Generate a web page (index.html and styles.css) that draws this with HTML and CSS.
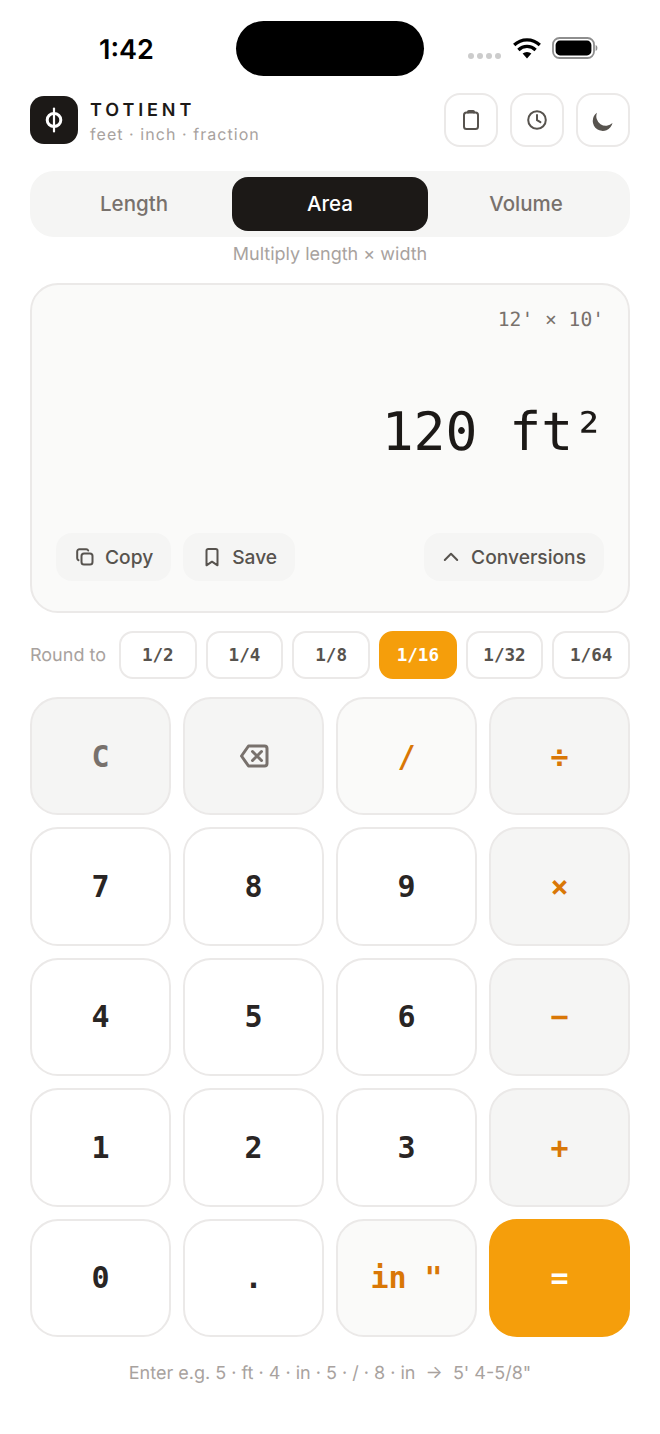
FILE: index.html
```html
<!DOCTYPE html>
<html lang="en">
<head>
<meta charset="utf-8">
<title>Totient</title>
<link rel="stylesheet" href="styles.css">
</head>
<body>
<div class="app">
  <div class="status">
    <div class="time">1:42</div>
    <div class="island"></div>
    <div class="sys">
      <div class="dots"><i></i><i></i><i></i><i></i></div>
      <svg class="wifi" width="30" height="22" viewBox="0 0 30 22"><path d="M15 21.500 10.600 16.600a6.600 6.600 0 0 1 8.800 0Z" fill="#000"/><path d="M6.400 13a12.200 12.200 0 0 1 17.200 0" fill="none" stroke="#000" stroke-width="3.200"/><path d="M2.200 8a18.300 18.300 0 0 1 25.600 0" fill="none" stroke="#000" stroke-width="3.200"/></svg>
      <svg class="battery" width="46" height="22" viewBox="0 0 46 22"><rect x="1" y="1" width="41" height="20" rx="6.500" fill="none" stroke="#8e8e8e" stroke-width="1.800"/><rect x="3.600" y="3.600" width="35.800" height="14.800" rx="4.400" fill="#000"/><path d="M43.600 8v6c1.200-.3 1.800-1.500 1.800-3s-.6-2.700-1.800-3Z" fill="#8e8e8e"/></svg>
    </div>
  </div>

  <header class="top">
    <div class="logo"><svg width="24" height="28" viewBox="0 0 24 28"><ellipse cx="12" cy="14" rx="6.800" ry="6.500" fill="none" stroke="#fff" stroke-width="3"/><path d="M12 2.500v23" stroke="#fff" stroke-width="2.200" stroke-linecap="round"/></svg></div>
    <div class="brand">
      <div class="name">TOTIENT</div>
      <div class="tag">feet · inch · fraction</div>
    </div>
    <div class="tools">
      <button class="tool"><svg width="24" height="24" viewBox="0 0 24 24" class="ico"><rect x="5" y="4.500" width="14" height="16.500" rx="2.500"/><path d="M9 4.500V3.800c0-.5.300-.8.800-.8h4.400c.5 0 .8.300.8.800v.7"/></svg></button>
      <button class="tool"><svg width="24" height="24" viewBox="0 0 24 24" class="ico"><circle cx="12" cy="12" r="8.800"/><path d="M12 7v5.200l3.400 2"/></svg></button>
      <button class="tool"><svg width="24" height="24" viewBox="0 0 24 24"><path d="M6 4.700A10 10 0 1 0 21.500 15 9.500 9.500 0 0 1 6 4.700Z" fill="#57534e"/></svg></button>
    </div>
  </header>

  <nav class="tabs">
    <button class="tab">Length</button>
    <button class="tab on">Area</button>
    <button class="tab">Volume</button>
  </nav>
  <p class="hint">Multiply length × width</p>

  <section class="display">
    <div class="expr">12' × 10'</div>
    <div class="result">120 ft²</div>
    <div class="actions">
      <button class="act"><svg width="20" height="20" viewBox="0 0 20 20" class="ico2"><rect x="6.500" y="6.500" width="11" height="11" rx="2.500"/><path d="M3.500 13.200c-.8-.3-1.300-1-1.300-1.900V4.500c0-1.300 1-2.300 2.300-2.300h6.800c.9 0 1.600.5 1.900 1.300"/></svg>Copy</button>
      <button class="act"><svg width="20" height="20" viewBox="0 0 20 20" class="ico2"><path d="M15.500 18.300l-5.500-3.600-5.500 3.600V3.700c0-1 .7-1.700 1.700-1.700h7.600c1 0 1.700.7 1.700 1.700Z"/></svg>Save</button>
      <button class="act conv"><svg width="20" height="20" viewBox="0 0 20 20" class="ico2"><path d="M3.800 13 10 6.800l6.200 6.200"/></svg>Conversions</button>
    </div>
  </section>

  <div class="round">
    <span class="round-label">Round to</span>
    <button class="chip">1/2</button>
    <button class="chip">1/4</button>
    <button class="chip">1/8</button>
    <button class="chip on">1/16</button>
    <button class="chip">1/32</button>
    <button class="chip">1/64</button>
  </div>

  <div class="keys">
    <button class="key fn">C</button>
    <button class="key fn"><svg width="30" height="24" viewBox="0 0 30 24" class="del"><path d="M9.500 2H25.500c1.400 0 2.500 1.100 2.500 2.500v15c0 1.400-1.100 2.500-2.500 2.500H9.500L2.500 12Z"/><path d="m13.500 7.500 9 9m0-9-9 9"/></svg></button>
    <button class="key op">/</button>
    <button class="key op shade">÷</button>
    <button class="key">7</button>
    <button class="key">8</button>
    <button class="key">9</button>
    <button class="key op shade">×</button>
    <button class="key">4</button>
    <button class="key">5</button>
    <button class="key">6</button>
    <button class="key op shade">−</button>
    <button class="key">1</button>
    <button class="key">2</button>
    <button class="key">3</button>
    <button class="key op shade">+</button>
    <button class="key">0</button>
    <button class="key">.</button>
    <button class="key op">in "</button>
    <button class="key eq">=</button>
  </div>

  <p class="foot">Enter e.g. 5 · ft · 4 · in · 5 · / · 8 · in &nbsp;→&nbsp; 5' 4-5/8"</p>
</div>
</body>
</html>
```
FILE: styles.css
```css
* { box-sizing: border-box; }
html, body { margin: 0; background: #fff; }
body { font-family: Inter, "Liberation Sans", sans-serif; color: #1c1917; text-rendering: geometricPrecision; }
button { font: inherit; cursor: pointer; padding: 0; }
.app { width: 660px; height: 1434px; padding: 21px 30px 0; display: flex; flex-direction: column; }

.status { height: 55px; display: flex; align-items: center; }
.time { width: 206px; padding-left: 69px; padding-top: 2px; font-size: 27px; font-weight: 600; color: #000; line-height: 55px; }
.island { width: 188px; height: 55px; border-radius: 28px; background: #000; }
.sys { display: flex; align-items: center; padding-left: 44px; }
.dots { display: flex; gap: 3px; margin-top: 14px; }
.dots i { width: 6px; height: 6px; border-radius: 50%; background: #ccc; }
.wifi { margin-top: -1px; margin-left: 11px; }
.battery { margin-left: 10px; margin-top: -1px; }

.top { display: flex; align-items: center; margin-top: 17px; height: 54px; }
.logo { width: 48px; height: 48px; border-radius: 14px; background: #1c1917; display: flex; align-items: center; justify-content: center; }
.brand { margin-left: 12px; flex: 1; padding-top: 5px; }
.name { font-size: 18px; font-weight: 600; letter-spacing: 3.900px; line-height: 24px; color: #1c1917; }
.tag { font-size: 16px; letter-spacing: 1.050px; line-height: 23px; color: #a8a29e; }
.tools { display: flex; gap: 12px; }
.tool { width: 54px; height: 54px; border-radius: 16px; border: 2px solid #ebe9e8; background: #fff; display: flex; align-items: center; justify-content: center; }
.ico { fill: none; stroke: #57534e; stroke-width: 2; stroke-linecap: round; stroke-linejoin: round; }
.ico2 { fill: none; stroke: #57534e; stroke-width: 2; stroke-linecap: round; stroke-linejoin: round; }

.tabs { display: flex; margin-top: 24px; padding: 6px; height: 66px; background: #f5f5f4; border-radius: 24px; }
.tab { flex: 1; border: 0; background: none; border-radius: 16px; padding-bottom: 2px; font-size: 20.500px; font-weight: 500; color: #78716c; }
.tab.on { background: #1c1917; color: #fff; }
.hint { margin: 7px 0 0; height: 22px; line-height: 22px; font-size: 18px; color: #a8a29e; text-align: center; }

.display { margin-top: 17px; height: 330px; display: flex; flex-direction: column; background: #fafaf9; border: 2px solid #ebe9e8; border-radius: 28px; padding: 21px 24px 30px; }
.expr { font-family: "DejaVu Sans Mono", monospace; font-size: 19.600px; line-height: 28px; color: #78716c; text-align: right; }
.result { font-family: "DejaVu Sans Mono", monospace; font-size: 53px; line-height: 64px; margin: 67px -1px 0 0; color: #1c1917; text-align: right; flex: 1; }
.actions { display: flex; gap: 12px; }
.act { height: 48px; display: flex; align-items: center; gap: 10px; padding: 0 18px 0 19px; border: 0; border-radius: 16px; background: #f5f5f4; font-size: 19.200px; font-weight: 500; color: #57534e; }
.conv { margin-left: auto; padding-left: 17px; }

.round { display: flex; align-items: center; gap: 9px; margin-top: 17px; height: 49px; }
.round-label { font-size: 18px; color: #a8a29e; width: 80px; padding-top: 2px; }
.chip { flex: 1; height: 48px; border: 2px solid #ebe9e8; border-radius: 14px; background: #fff; font-family: "DejaVu Sans Mono", monospace; font-weight: 700; font-size: 17.600px; color: #57534e; }
.chip.on { background: #f59e0b; border-color: #f59e0b; color: #fff; }

.keys { margin-top: 18px; display: grid; grid-template-columns: repeat(4, 141px); grid-auto-rows: 118.400px; gap: 12px; }
.key { border: 2px solid #ebe9e8; border-radius: 28px; background: #fff; font-family: "DejaVu Sans Mono", monospace; font-weight: 700; font-size: 30px; color: #292524; display: flex; align-items: center; justify-content: center; }
.fn { background: #f5f5f4; color: #78716c; }
.op { color: #d97706; background: #fafaf9; }
.op.shade { background: #f5f5f4; }
.eq { background: #f59e0b; border-color: #f59e0b; color: #fff; }
.del { fill: none; stroke: #78716c; stroke-width: 3; stroke-linecap: round; stroke-linejoin: round; }

.foot { margin: 25px 0 0; font-size: 18px; line-height: 24px; color: #a8a29e; text-align: center; }
```
